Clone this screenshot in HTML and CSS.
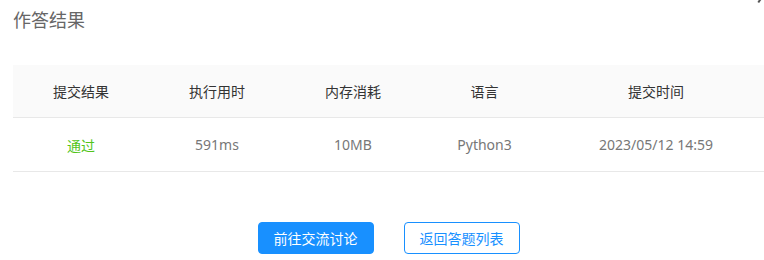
FILE: index.html
```html
<!DOCTYPE html>
<html lang="zh-CN">
<head>
    <meta charset="UTF-8">
    <meta name="viewport" content="width=device-width, initial-scale=1.0">
    <title>作答结果</title>
    <link rel="stylesheet" href="styles.css">
</head>
<body>
    <div class="result-panel">
        <span class="close-mark"></span>
        <h2 class="result-title">作答结果</h2>
        <div class="result-table">
            <div class="table-row table-head">
                <div class="cell">提交结果</div>
                <div class="cell">执行用时</div>
                <div class="cell">内存消耗</div>
                <div class="cell">语言</div>
                <div class="cell">提交时间</div>
            </div>
            <div class="table-row">
                <div class="cell status-pass">通过</div>
                <div class="cell">591ms</div>
                <div class="cell">10MB</div>
                <div class="cell">Python3</div>
                <div class="cell">2023/05/12 14:59</div>
            </div>
        </div>
        <div class="actions">
            <button class="btn btn-primary">前往交流讨论</button>
            <button class="btn btn-plain">返回答题列表</button>
        </div>
    </div>
</body>
</html>
```

FILE: styles.css
```css
body {
    margin: 0;
    font-family: "Segoe UI", "Noto Sans", "Noto Sans CJK SC", sans-serif;
    background-color: #fff;
    overflow: hidden;
}
.result-panel {
    position: relative;
    width: 751px;
    padding: 8px 0 0 13px;
}
.close-mark {
    position: absolute;
    top: -3px;
    right: 3px;
    width: 2px;
    height: 6px;
    background: #555;
    transform: rotate(35deg);
}
.result-title {
    margin: 0 0 32px;
    font-size: 18px;
    line-height: 25px;
    font-weight: normal;
    color: #666;
}
.result-table {
    font-size: 14px;
}
.table-row {
    display: grid;
    grid-template-columns: 136px 136px 136px 127px 216px;
    height: 52px;
    border-bottom: 1px solid #e8e8e8;
    color: #777;
}
.table-row + .table-row {
    height: 53px;
}
.table-head {
    background-color: #fafafa;
    color: #333;
}
.cell {
    display: flex;
    align-items: center;
    justify-content: center;
}
.status-pass {
    color: #52c41a;
}
.actions {
    display: flex;
    justify-content: center;
    gap: 30px;
    margin-top: 50px;
}
.btn {
    height: 32px;
    padding: 0 15px;
    font-family: inherit;
    font-size: 14px;
    border: 1px solid #1890ff;
    border-radius: 4px;
    cursor: pointer;
}
.btn-primary {
    background-color: #1890ff;
    color: #fff;
}
.btn-plain {
    background-color: #fff;
    color: #1890ff;
}
```
